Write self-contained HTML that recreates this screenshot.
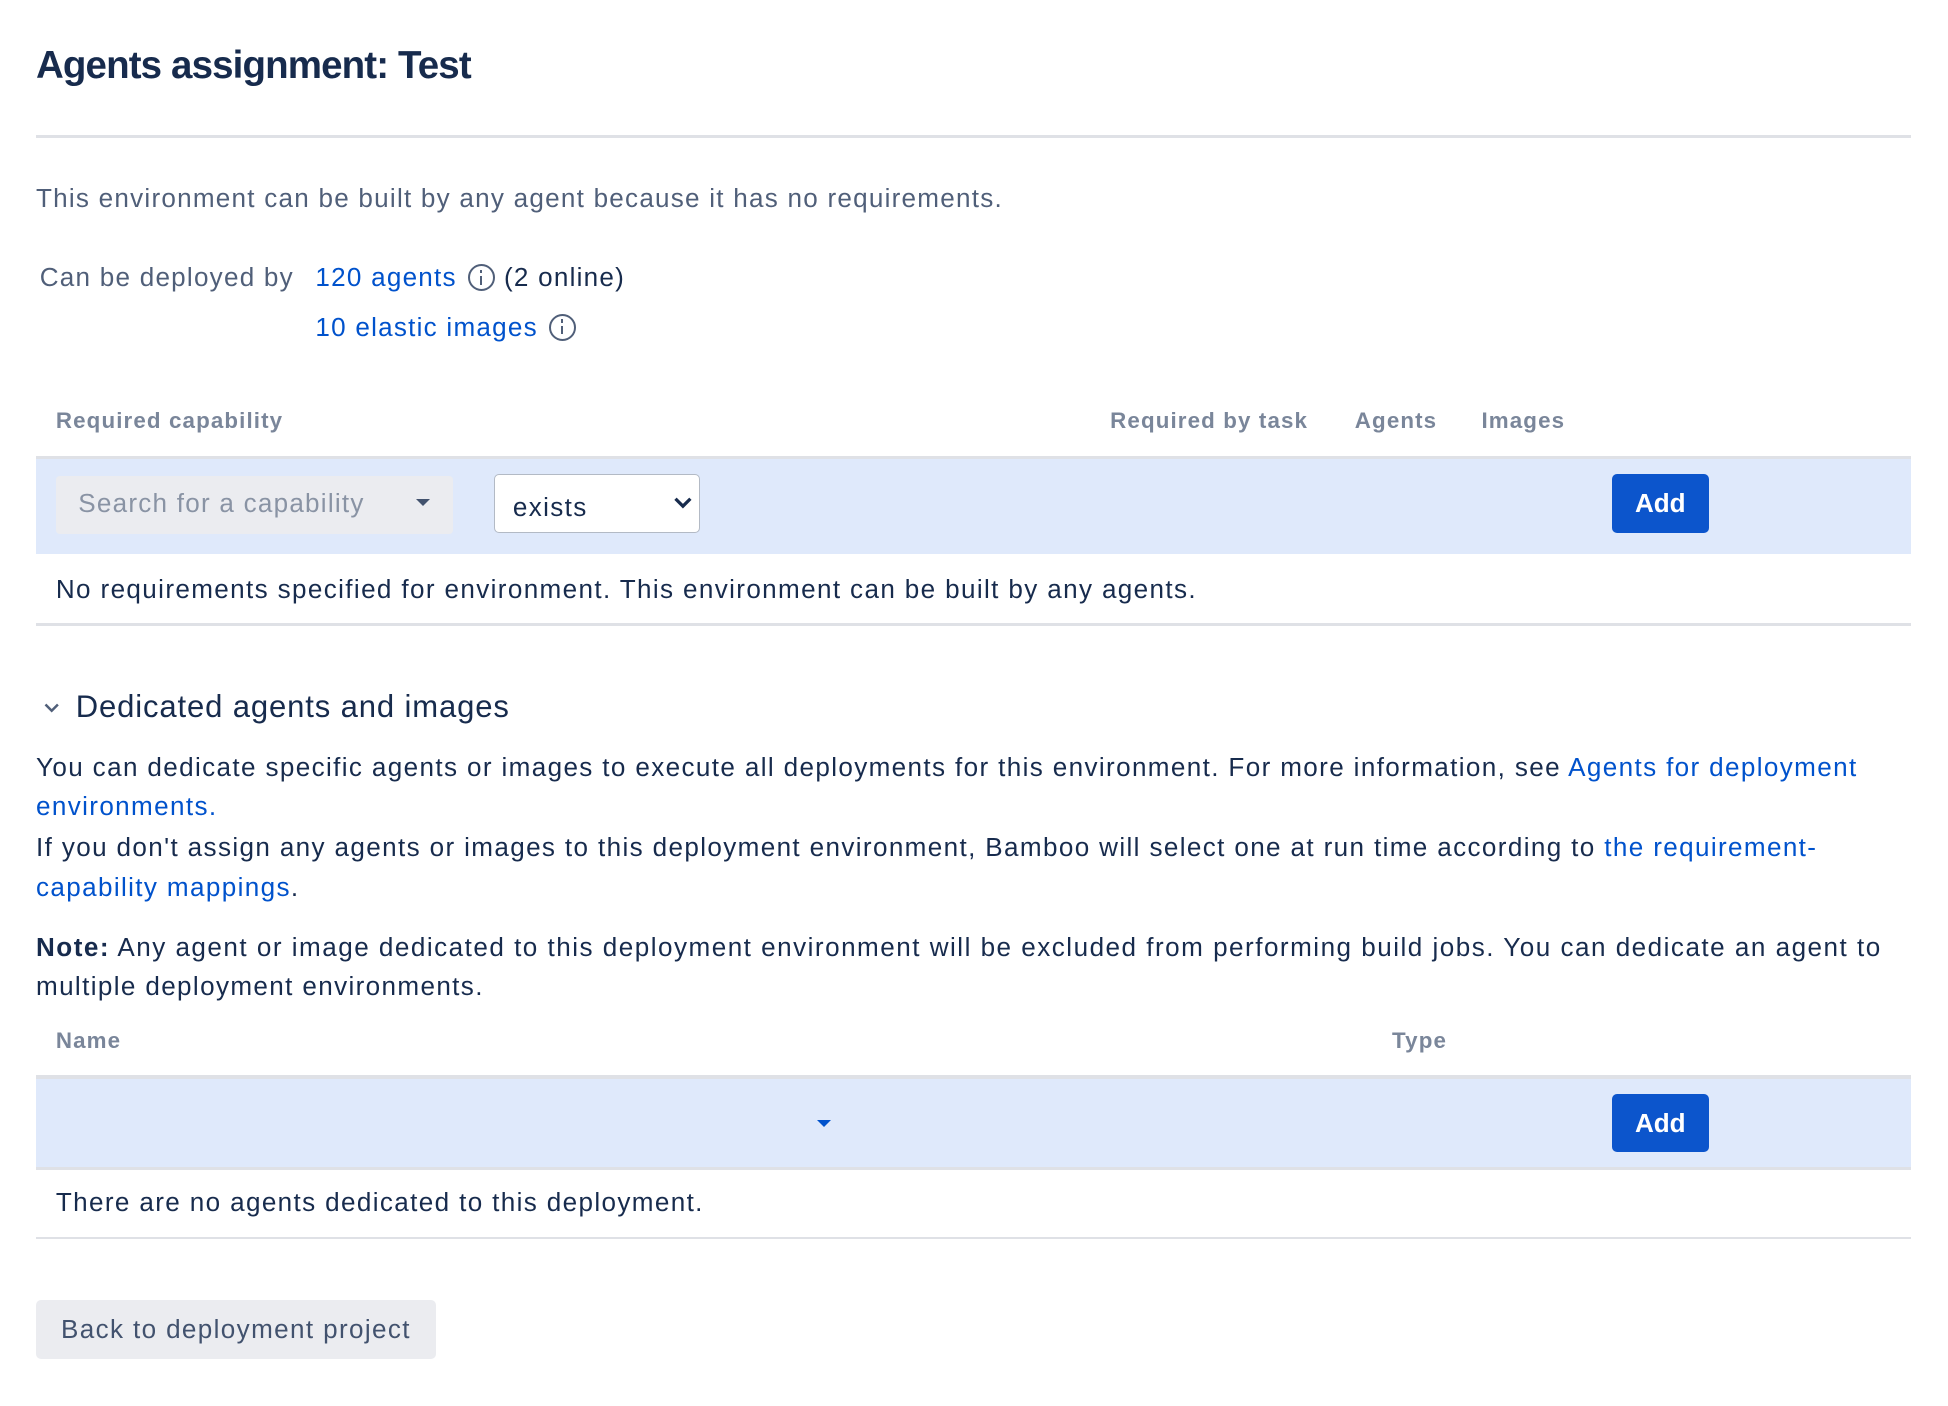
<!DOCTYPE html>
<html><head><meta charset="utf-8"><style>
html,body{margin:0;padding:0;background:#fff;overflow:hidden}
body{width:1948px;height:1406px}
#w{zoom:1.2418;position:relative;width:1570px;height:1132px;font-family:"Liberation Sans",Arial,sans-serif;color:#172b4d}
.a{position:absolute;white-space:nowrap;line-height:32px;height:32px}
.t20{font-size:21px;letter-spacing:1.1px}
.g{color:#505f79}
.l{color:#0052cc}
.h{font-size:18px;font-weight:bold;color:#7a869a;letter-spacing:0.9px}
.line{position:absolute;left:29px;width:1510px;height:2px;background:#dfe1e6}
.row{position:absolute;left:29px;width:1510px;background:#dfe9fb}
.btn{position:absolute;left:1298px;width:78px;height:47px;background:#0c55cc;border-radius:4px;color:#fff;font-weight:bold;font-size:21px;line-height:47px;text-align:center}
.ic{display:inline-block;width:22px;height:22px;border:2px solid #505f79;border-radius:50%;box-sizing:border-box;vertical-align:-4px;position:relative;margin:0 7px 0 9px}
.ic:before{content:"";position:absolute;left:8px;top:3px;width:2px;height:3px;background:#505f79}
.ic:after{content:"";position:absolute;left:8px;top:8px;width:2px;height:7px;background:#505f79}
</style></head><body><div id="w">
<div class="a" style="left:29px;top:33px;font-size:31px;line-height:40px;height:40px;font-weight:bold;letter-spacing:-0.7px">Agents assignment: Test</div>
<div class="line" style="top:109px;height:2px"></div>
<div class="a t20 g" style="left:29px;top:144px;letter-spacing:1px">This environment can be built by any agent because it has no requirements.</div>
<div class="a t20 g" style="left:32px;top:208px;letter-spacing:1px">Can be deployed by</div>
<div class="a t20" style="left:254px;top:208px;letter-spacing:1px"><span class="l">120 agents</span><span class="ic"></span>(2 online)</div>
<div class="a t20" style="left:254px;top:248px;letter-spacing:1px"><span class="l">10 elastic images</span><span class="ic"></span></div>
<div class="a h" style="left:45px;top:323px">Required capability</div>
<div class="a h" style="left:894px;top:323px">Required by task</div>
<div class="a h" style="left:1091px;top:323px">Agents</div>
<div class="a h" style="left:1193px;top:323px">Images</div>
<div class="line" style="top:367px;height:3px"></div>
<div class="row" style="top:370px;height:76px"></div>
<div style="position:absolute;left:45px;top:383px;width:320px;height:47px;background:#ebecf0;border-radius:3px"></div>
<div class="a t20" style="left:63px;top:390px;color:#8993a4;letter-spacing:1px">Search for a capability</div>
<div style="position:absolute;left:335px;top:402px;border-left:6px solid transparent;border-right:6px solid transparent;border-top:6px solid #42526e"></div>
<div style="position:absolute;left:398px;top:382px;width:166px;height:47px;background:#fff;border:1px solid #b3bac5;border-radius:4px;box-sizing:border-box"></div>
<div class="a t20" style="left:413px;top:393px">exists</div>
<svg style="position:absolute;left:542px;top:399px" width="16" height="12"><path d="M2 3 L8 9 L14 3" stroke="#172b4d" stroke-width="2.6" fill="none"/></svg>
<div class="btn" style="top:382px">Add</div>
<div class="a t20" style="left:45px;top:459px">No requirements specified for environment. This environment can be built by any agents.</div>
<div class="line" style="top:502px"></div>
<svg style="position:absolute;left:35px;top:565px" width="14" height="10"><path d="M2 2 L7 7 L12 2" stroke="#505f79" stroke-width="2" fill="none"/></svg>
<div class="a" style="left:61px;top:553px;font-size:25px;font-weight:500;letter-spacing:0.7px">Dedicated agents and images</div>
<div class="a t20" style="left:29px;top:602px">You can dedicate specific agents or images to execute all deployments for this environment. For more information, see <span class="l">Agents for deployment</span></div>
<div class="a t20 l" style="left:29px;top:634px">environments.</div>
<div class="a t20" style="left:29px;top:667px">If you don't assign any agents or images to this deployment environment, Bamboo will select one at run time according to <span class="l">the requirement-</span></div>
<div class="a t20" style="left:29px;top:699px"><span class="l">capability mappings</span>.</div>
<div class="a t20" style="left:29px;top:747px;letter-spacing:1.2px"><b>Note:</b> Any agent or image dedicated to this deployment environment will be excluded from performing build jobs. You can dedicate an agent to</div>
<div class="a t20" style="left:29px;top:779px">multiple deployment environments.</div>
<div class="a h" style="left:45px;top:822px">Name</div>
<div class="a h" style="left:1121px;top:822px">Type</div>
<div class="line" style="top:866px;height:3px"></div>
<div class="row" style="top:869px;height:71px"></div>
<div style="position:absolute;left:658px;top:902px;border-left:6px solid transparent;border-right:6px solid transparent;border-top:6px solid #0052cc"></div>
<div class="btn" style="top:881px">Add</div>
<div class="line" style="top:940px;height:2px;background:#dfe1e6"></div>
<div class="a t20" style="left:45px;top:953px">There are no agents dedicated to this deployment.</div>
<div class="line" style="top:996px"></div>
<div style="position:absolute;left:29px;top:1047px;width:322px;height:47px;background:#ebecf0;border-radius:4px;color:#42526e;font-size:21px;letter-spacing:1.1px;line-height:47px;text-align:center">Back to deployment project</div>
</div></body></html>
